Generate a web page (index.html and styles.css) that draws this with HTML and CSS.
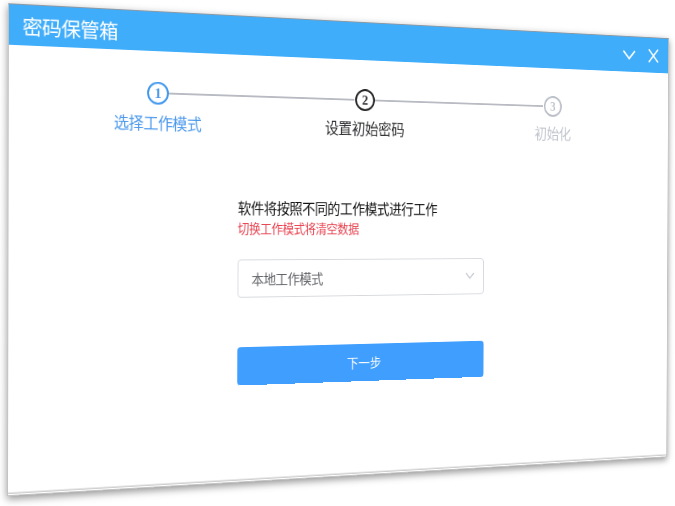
FILE: index.html
```html
<!DOCTYPE html>
<html lang="zh-CN">
<head>
<meta charset="utf-8">
<title>密码保管箱</title>
<link rel="stylesheet" href="styles.css">
</head>
<body>
<div class="stage">
<main class="window">
  <header class="titlebar">
    <h1 class="title">密码保管箱</h1>
    <div class="controls">
      <svg class="minimize" viewBox="0 0 18 12"><path d="M1 1.5 9 10.5 17 1.5"/></svg>
      <svg class="close" viewBox="0 0 16 16"><path d="M1.5 .5 14.5 15.5M14.5 .5 1.5 15.5"/></svg>
    </div>
  </header>
  <section class="steps">
    <div class="step active"><span class="dot">1</span><span class="label">选择工作模式</span></div>
    <div class="step current"><span class="dot">2</span><span class="label">设置初始密码</span></div>
    <div class="step"><span class="dot">3</span><span class="label">初始化</span></div>
  </section>
  <section class="form">
    <p class="hint">软件将按照不同的工作模式进行工作</p>
    <p class="warning">切换工作模式将清空数据</p>
    <div class="select">
      <span>本地工作模式</span>
      <svg class="arrow" viewBox="0 0 12 8"><path d="M1 1 6 6.5 11 1"/></svg>
    </div>
    <button class="next">下一步</button>
  </section>
</main>
</div>
</body>
</html>
```

FILE: styles.css
```css
* { box-sizing: border-box; }
html, body { margin: 0; background: #fff; }
body { font-family: "Noto Sans CJK SC", "Noto Sans", sans-serif; }
.stage { width: 675px; height: 506px; overflow: hidden; }

.window {
  display: flex;
  flex-direction: column;
  width: 800px;
  height: 500px;
  background: #fff;
  border: 1px solid #c3c3c3;
  border-top-color: #8d99a3;
  box-shadow: inset 0 -1px #fff, inset 0 -2.4px #d0cece, 0 3px 8px rgba(0, 0, 0, .42);
  transform-origin: 0 0;
  will-change: transform;
  /* Projects the 800x500 window onto a tilted plane. */
  transform: matrix3d(.9741, .052148, 0, .000221, -.0019713, .988034, 0, .000004102, 0, 0, 1, 0, 8, 3.2, 0, 1);
}

.titlebar {
  flex: none;
  display: flex;
  align-items: center;
  justify-content: space-between;
  height: 41px;
  padding: 0 13px 0 14px;
  background: #40adfa;
}
.title { margin: 0; color: #fff; font-size: 20.8px; letter-spacing: -.6px; line-height: 38px; font-weight: 400; }
.controls { display: flex; align-items: center; gap: 17px; }
.controls svg { fill: none; stroke: #fff; stroke-width: 1.9; }
.minimize { width: 18px; height: 12px; }
.close { width: 16px; height: 16px; }

.steps { flex: none; display: flex; margin: 32px 39px 0; height: 60px; }
.step {
  position: relative;
  flex: 1;
  display: flex;
  flex-direction: column;
  align-items: center;
  color: #c0c4cc;
}
.step + .step::before {
  content: "";
  position: absolute;
  top: 11px;
  left: calc(-50% + 12px);
  right: calc(50% + 13px);
  height: 2px;
  background: #b9bbc3;
}
.dot {
  display: flex;
  align-items: center;
  justify-content: center;
  width: 24px;
  height: 24px;
  border: 2px solid #b9bdc6;
  border-radius: 50%;
  font: bold 15px/20px "Liberation Serif", serif;
}
.label { margin-top: 7px; font-size: 16.6px; letter-spacing: -.5px; line-height: 24px; white-space: nowrap; }
.active { color: #4a98ec; }
.active .dot { border-color: #3f97ee; }
.current { color: #303133; }
.current .dot { border-color: #222; }

.form { width: 300px; margin: 59px auto 0; }
.hint { margin: 0; font-size: 15.5px; letter-spacing: -.5px; line-height: 24px; color: #111; white-space: nowrap; }
.warning { margin: 0; font-size: 13.4px; letter-spacing: -.4px; line-height: 20px; color: #e8414e; }
.select {
  display: flex;
  align-items: center;
  justify-content: space-between;
  height: 41px;
  margin-top: 24px;
  padding: 0 11px 1px 15px;
  border: 1px solid #d6d8dd;
  border-radius: 4px;
  font-size: 14.4px;
  letter-spacing: -.4px;
  color: #606266;
}
.arrow { width: 12px; height: 8px; fill: none; stroke: #c0c4cc; stroke-width: 1.2; }
.next {
  display: block;
  width: 300px;
  height: 41px;
  margin-top: 53px;
  padding: 0;
  border: 0;
  border-radius: 4px;
  background: #409eff;
  color: #fff;
  font: 14px/39px "Noto Sans CJK SC", sans-serif;
}
```
